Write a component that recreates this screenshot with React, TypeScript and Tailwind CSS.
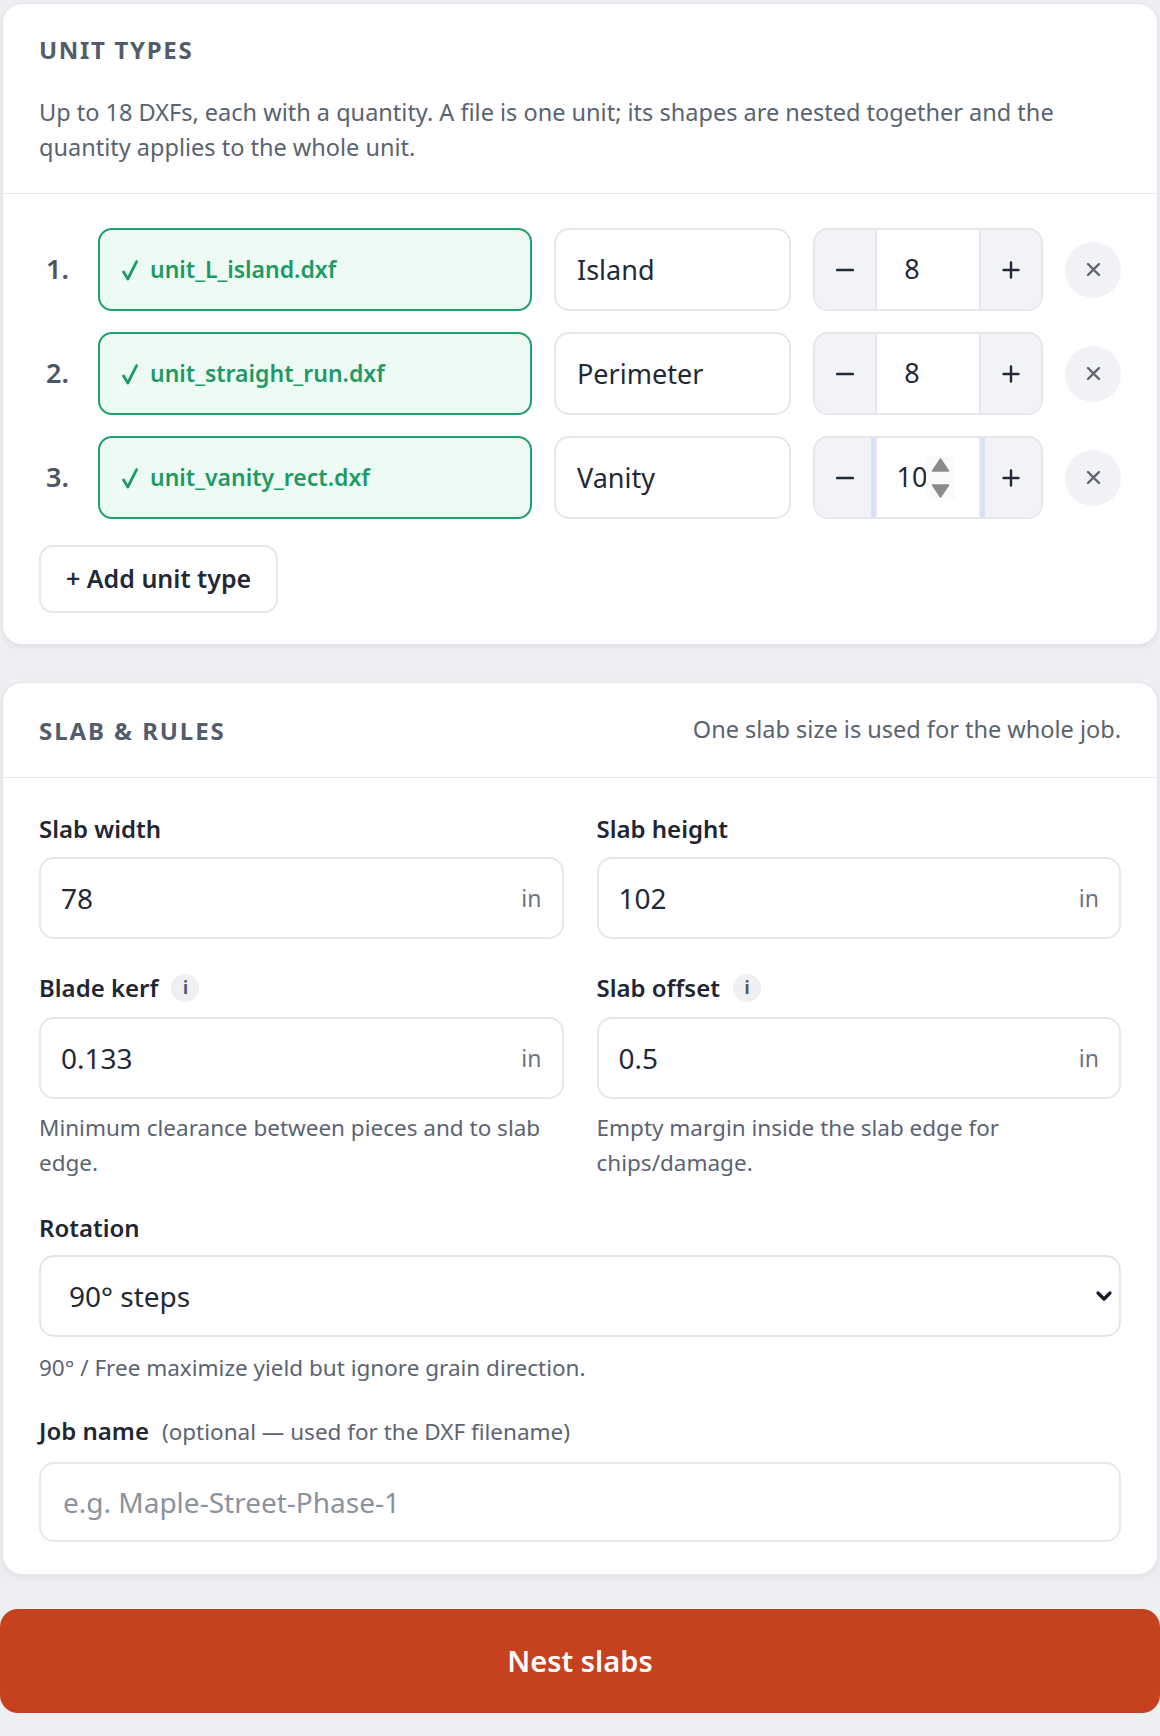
import { ChevronDown } from "lucide-react";

const units = [
    { file: "unit_L_island.dxf", name: "Island", qty: "8", focused: false },
    { file: "unit_straight_run.dxf", name: "Perimeter", qty: "8", focused: false },
    { file: "unit_vanity_rect.dxf", name: "Vanity", qty: "10", focused: true },
];

function MinusIcon() {
    return (
        <svg width="18" height="18" viewBox="0 0 18 18" fill="none">
            <path d="M1 9h16" stroke="#1f2937" strokeWidth="2.4" strokeLinecap="round" />
        </svg>
    );
}

function PlusIcon() {
    return (
        <svg width="18" height="18" viewBox="0 0 18 18" fill="none">
            <path d="M1.5 9h15M9 1.5v15" stroke="#1f2937" strokeWidth="2.4" strokeLinecap="round" />
        </svg>
    );
}

function CloseIcon() {
    return (
        <svg width="15" height="15" viewBox="0 0 15 15" fill="none">
            <path d="M2 2l11 11M13 2L2 13" stroke="#5b6472" strokeWidth="2.4" strokeLinecap="round" />
        </svg>
    );
}

function CheckIcon() {
    return (
        <svg width="16" height="21" viewBox="0 0 16 21" fill="none" className="mt-[2px] shrink-0">
            <path d="M1.6 12 L5.8 19 L14.6 1.6" stroke="#1e9a66" strokeWidth="2.8" strokeLinecap="round" strokeLinejoin="round" />
        </svg>
    );
}

function Spinner() {
    return (
        <svg width="29" height="43" viewBox="0 0 29 43" className="absolute right-[24px] top-1/2 -translate-y-1/2">
            <rect width="29" height="43" fill="#fafafa" />
            <path d="M14.5 2.5 L22.5 14.5 L6.5 14.5 Z" fill="#8a8a8a" stroke="#8a8a8a" strokeWidth="1.5" strokeLinejoin="round" />
            <path d="M14.5 40.5 L22.5 28.5 L6.5 28.5 Z" fill="#8a8a8a" stroke="#8a8a8a" strokeWidth="1.5" strokeLinejoin="round" />
        </svg>
    );
}

function InfoDot() {
    return (
        <span className="flex h-[28px] w-[28px] items-center justify-center rounded-full bg-[#eef0f3] text-[17px] font-bold text-[#4b5563]">
            i
        </span>
    );
}

function UnitInput({ value }: { value: string }) {
    return (
        <div className="flex h-[82px] items-center rounded-[15px] border-2 border-[#e5e7eb] bg-white px-[20px]">
            <input
                defaultValue={value}
                className="min-w-0 flex-1 bg-transparent text-[28px] text-[#1f2937] outline-none"
            />
            <span className="text-[23px] text-[#6b7280]">in</span>
        </div>
    );
}

export default function App() {
    return (
        <div className="min-h-screen bg-[#edeff2] pt-[3px] font-['Noto_Sans','DejaVu_Sans',sans-serif] text-[#1f2937]">

            {/* Unit types card */}
            <section className="mx-[2px] rounded-[20px] border border-[#e3e6ea] bg-white shadow-[0_2px_6px_rgba(15,23,42,0.06)]">
                <header className="border-b border-[#e5e7eb] px-[36px] pt-[30px] pb-[28px]">
                    <h2 className="text-[24px] font-bold uppercase leading-[31px] tracking-[0.07em] text-[#525d6c]">Unit types</h2>
                    <p className="mt-[30px] text-[23.5px] leading-[35px] text-[#596372]">
                        Up to 18 DXFs, each with a quantity. A file is one unit; its shapes are nested together and the quantity applies to the whole unit.
                    </p>
                </header>

                <div className="px-[36px] pt-[34px] pb-[31px]">
                    <div className="flex flex-col gap-[21px]">
                        {units.map((u, i) => (
                            <div key={i} className="grid h-[83px] grid-cols-[37px_1fr_237px_230px_56px] items-center gap-[22px]">
                                <div className="text-center text-[27px] font-semibold text-[#4b5563]">{i + 1}.</div>

                                <div className="flex h-full items-center gap-[12px] rounded-[14px] border-2 border-[#22a06b] bg-[#eefaf4] pl-[22px] text-[23px] font-semibold text-[#1e9a66]">
                                    <CheckIcon />
                                    <span>{u.file}</span>
                                </div>

                                <input
                                    defaultValue={u.name}
                                    className="h-full min-w-0 rounded-[15px] border-2 border-[#e5e7eb] bg-white px-[21px] text-[27px] text-[#1f2937] outline-none"
                                />

                                <div className="flex h-full overflow-hidden rounded-[15px] border-2 border-[#e5e7eb]">
                                    <button className="flex w-[60px] items-center justify-center bg-[#f1f3f6]">
                                        <MinusIcon />
                                    </button>
                                    <div
                                        className={
                                            u.focused
                                                ? "relative z-10 flex flex-1 items-center justify-center border-x-2 border-[#e5e7eb] bg-white pr-[32px] text-[27px] ring-[4px] ring-[#d6e0f6]"
                                                : "relative flex flex-1 items-center justify-center border-x-2 border-[#e5e7eb] bg-white pr-[32px] text-[27px]"
                                        }
                                    >
                                        {u.qty}
                                        {u.focused && <Spinner />}
                                    </div>
                                    <button className="flex w-[60px] items-center justify-center bg-[#f1f3f6]">
                                        <PlusIcon />
                                    </button>
                                </div>

                                <button className="flex h-[56px] w-[56px] items-center justify-center rounded-full bg-[#f0f2f5]">
                                    <CloseIcon />
                                </button>
                            </div>
                        ))}
                    </div>

                    <button className="mt-[26px] h-[68px] rounded-[14px] border-2 border-[#e5e7eb] bg-white px-[25px] text-[25px] font-semibold text-[#1f2937]">
                        + Add unit type
                    </button>
                </div>
            </section>

            {/* Slab & rules card */}
            <section className="mx-[2px] mt-[37px] rounded-[20px] border border-[#e3e6ea] bg-white shadow-[0_2px_6px_rgba(15,23,42,0.06)]">
                <header className="flex h-[95px] items-center justify-between border-b border-[#e5e7eb] px-[36px]">
                    <h2 className="text-[24px] font-bold uppercase leading-[31px] tracking-[0.08em] text-[#525d6c]">Slab &amp; rules</h2>
                    <span className="text-[23.5px] text-[#596372]">One slab size is used for the whole job.</span>
                </header>

                <div className="px-[36px] pt-[35px] pb-[32px]">
                    <div className="grid grid-cols-2 gap-x-[33px]">
                        <div>
                            <label className="mb-[12px] block text-[24px] font-semibold leading-[32px] text-[#1f2633]">Slab width</label>
                            <UnitInput value="78" />
                        </div>
                        <div>
                            <label className="mb-[12px] block text-[24px] font-semibold leading-[32px] text-[#1f2633]">Slab height</label>
                            <UnitInput value="102" />
                        </div>
                    </div>

                    <div className="mt-[33px] grid grid-cols-2 gap-x-[33px]">
                        <div>
                            <label className="mb-[13px] flex items-center gap-[13px] text-[24px] font-semibold leading-[32px] text-[#1f2633]">
                                Blade kerf <InfoDot />
                            </label>
                            <UnitInput value="0.133" />
                            <p className="mt-[11px] text-[22.5px] leading-[35px] text-[#5b6472]">
                                Minimum clearance between pieces and to slab edge.
                            </p>
                        </div>
                        <div>
                            <label className="mb-[13px] flex items-center gap-[13px] text-[24px] font-semibold leading-[32px] text-[#1f2633]">
                                Slab offset <InfoDot />
                            </label>
                            <UnitInput value="0.5" />
                            <p className="mt-[11px] text-[22.5px] leading-[35px] text-[#5b6472]">
                                Empty margin inside the slab edge for chips/damage.
                            </p>
                        </div>
                    </div>

                    <div className="mt-[32px]">
                        <label className="mb-[11px] block text-[24px] font-semibold leading-[32px] text-[#1f2633]">Rotation</label>
                        <div className="relative">
                            <select
                                defaultValue="90"
                                className="h-[82px] w-full appearance-none rounded-[15px] border-2 border-[#e5e7eb] bg-white pl-[28px] text-[28px] text-[#1f2937] outline-none"
                            >
                                <option value="90">90° steps</option>
                                <option value="free">Free</option>
                                <option value="none">None</option>
                            </select>
                            <ChevronDown
                                className="pointer-events-none absolute right-[5px] top-1/2 h-[24px] w-[24px] -translate-y-1/2 text-[#111827]"
                                strokeWidth={3.2}
                            />
                        </div>
                        <p className="mt-[13px] text-[22.5px] leading-[35px] text-[#5b6472]">
                            90° / Free maximize yield but ignore grain direction.
                        </p>
                    </div>

                    <div className="mt-[30px]">
                        <label className="mb-[14px] flex items-baseline gap-[13px] leading-[32px]">
                            <span className="text-[24px] font-semibold text-[#1f2633]">Job name</span>
                            <span className="text-[22.5px] text-[#5b6472]">(optional — used for the DXF filename)</span>
                        </label>
                        <input
                            placeholder="e.g. Maple-Street-Phase-1"
                            className="h-[80px] w-full rounded-[15px] border-2 border-[#e5e7eb] bg-white px-[22px] text-[28px] text-[#1f2937] outline-none placeholder:text-[#8b929c]"
                        />
                    </div>
                </div>
            </section>

            <button className="mt-[34px] flex h-[104px] w-full items-center justify-center rounded-[18px] bg-[#c6421f] text-[29px] font-semibold text-white">
                Nest slabs
            </button>
        </div>
    );
}
